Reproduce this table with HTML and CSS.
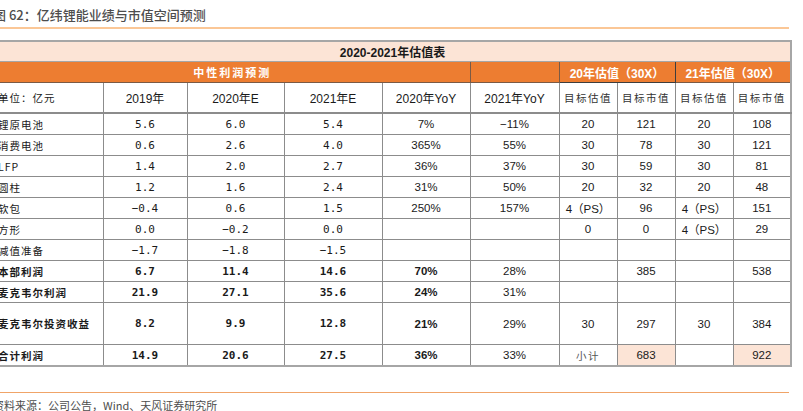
FILE: index.html
```html
<!DOCTYPE html>
<html lang="zh">
<head>
<meta charset="utf-8">
<title>亿纬锂能业绩与市值空间预测</title>
<link rel="stylesheet" href="styles.css">
</head>
<body>
<div class="page">
  <div class="fig-title">图 62：亿纬锂能业绩与市值空间预测</div>
  <table class="val">
    <colgroup>
      <col class="c-label"><col class="c-y19"><col class="c-y20"><col class="c-y21"><col class="c-yoy20"><col class="c-yoy21">
      <col class="c-v"><col class="c-v"><col class="c-v"><col class="c-v">
    </colgroup>
    <tr class="r-title"><td colspan="10">2020-2021年估值表</td></tr>
    <tr class="r-orange">
      <td colspan="5" class="or-main">中性利润预测</td>
      <td class="or-empty"></td>
      <td colspan="2" class="or-box">20年估值（30X）</td>
      <td colspan="2" class="or-last">21年估值（30X）</td>
    </tr>
    <tr class="r-head">
      <td class="lbl">单位：亿元</td>
      <td>2019年</td><td>2020年E</td><td>2021年E</td><td>2020年YoY</td><td>2021年YoY</td>
      <td class="cjk">目标估值</td><td class="cjk">目标市值</td><td class="cjk">目标估值</td><td class="cjk">目标市值</td>
    </tr>
    <tr><td class="lbl">锂原电池</td><td class="m">5.6</td><td class="m">6.0</td><td class="m">5.4</td><td>7%</td><td>−11%</td><td>20</td><td>121</td><td>20</td><td>108</td></tr>
    <tr><td class="lbl">消费电池</td><td class="m">0.6</td><td class="m">2.6</td><td class="m">4.0</td><td>365%</td><td>55%</td><td>30</td><td>78</td><td>30</td><td>121</td></tr>
    <tr><td class="lbl">LFP</td><td class="m">1.4</td><td class="m">2.0</td><td class="m">2.7</td><td>36%</td><td>37%</td><td>30</td><td>59</td><td>30</td><td>81</td></tr>
    <tr><td class="lbl">圆柱</td><td class="m">1.2</td><td class="m">1.6</td><td class="m">2.4</td><td>31%</td><td>50%</td><td>20</td><td>32</td><td>20</td><td>48</td></tr>
    <tr><td class="lbl">软包</td><td class="m">−0.4</td><td class="m">0.6</td><td class="m">1.5</td><td>250%</td><td>157%</td><td>4（PS）</td><td>96</td><td>4（PS）</td><td>151</td></tr>
    <tr><td class="lbl">方形</td><td class="m">0.0</td><td class="m">−0.2</td><td class="m">0.0</td><td></td><td></td><td>0</td><td>0</td><td>4（PS）</td><td>29</td></tr>
    <tr><td class="lbl">减值准备</td><td class="m">−1.7</td><td class="m">−1.8</td><td class="m">−1.5</td><td></td><td></td><td></td><td></td><td></td><td></td></tr>
    <tr class="b"><td class="lbl">本部利润</td><td class="m">6.7</td><td class="m">11.4</td><td class="m">14.6</td><td>70%</td><td class="n">28%</td><td></td><td class="n">385</td><td></td><td class="n">538</td></tr>
    <tr class="b"><td class="lbl">麦克韦尔利润</td><td class="m">21.9</td><td class="m">27.1</td><td class="m">35.6</td><td>24%</td><td class="n">31%</td><td></td><td></td><td></td><td></td></tr>
    <tr class="b r-tall"><td class="lbl">麦克韦尔投资收益</td><td class="m">8.2</td><td class="m">9.9</td><td class="m">12.8</td><td>21%</td><td class="n">29%</td><td class="n">30</td><td class="n">297</td><td class="n">30</td><td class="n">384</td></tr>
    <tr class="b"><td class="lbl">合计利润</td><td class="m">14.9</td><td class="m">20.6</td><td class="m">27.5</td><td>36%</td><td class="n">33%</td><td class="n cjk sub">小计</td><td class="n peach">683</td><td></td><td class="n peach">922</td></tr>
  </table>
  <div class="source">资料来源：公司公告，Wind、天风证券研究所</div>
</div>
</body>
</html>
```

FILE: styles.css
```css
html, body {
  margin: 0;
  padding: 0;
  background: #ffffff;
}

body {
  font-family: "Liberation Sans", "Noto Sans CJK SC", sans-serif;
  color: #1a1a1a;
}

.page {
  margin-left: -7px;
  width: 797px;
}

.fig-title {
  font-family: "Noto Sans CJK SC", sans-serif;
  font-size: 13px;
  font-weight: 500;
  color: #4d4d4d;
  line-height: 20px;
  padding-top: 5px;
  height: 22px;
  border-bottom: 2px solid #fbc796;
  width: 796px;
  margin-bottom: 11px;
}

.val {
  border-collapse: collapse;
  table-layout: fixed;
  width: 797px;
  border: 2px solid #a6a6a6;
}

.c-label { width: 109px; }
.c-y19 { width: 84px; }
.c-y20 { width: 97px; }
.c-y21 { width: 98px; }
.c-yoy20 { width: 88px; }
.c-yoy21 { width: 89px; }
.c-v { width: 58px; }

.val td {
  border: 1px solid #8c8c8c;
  padding: 0;
  text-align: center;
  vertical-align: middle;
  font-size: 11.5px;
  height: 20px;
  white-space: nowrap;
  overflow: hidden;
}

.val .r-title td {
  background: #fce4d6;
  font-weight: bold;
  font-size: 12px;
  height: 19px;
  border-color: #a6a6a6;
}

.val .r-orange td {
  background: #ed7d31;
  color: #ffffff;
  font-weight: bold;
  font-size: 12px;
  height: 20px;
  border-color: #7a5a45;
}

.val .r-orange .or-main {
  font-family: "Noto Sans CJK SC", sans-serif;
  letter-spacing: 2px;
  font-size: 11px;
  border-right-color: #7a5a45;
}

.val .r-orange .or-box {
  border: 1px solid #3d3d3d;
}

.val .r-orange .or-last {
  border-right-color: #a6a6a6;
}

.val .r-head td {
  height: 29px;
  border-bottom: 2px solid #8c8c8c;
  font-size: 12px;
}

.val td.lbl {
  text-align: left;
  padding-left: 3px;
  font-family: "Noto Sans CJK SC", sans-serif;
  font-size: 10.5px;
  letter-spacing: 1px;
}

.val td.cjk {
  font-family: "Noto Sans CJK SC", sans-serif;
  font-size: 10.5px;
  letter-spacing: 1.5px;
  color: #333333;
}

.val td.m {
  font-family: "DejaVu Sans Mono", monospace;
  font-size: 11px;
}

.val tr.b td {
  font-weight: bold;
}

.val tr.b td.n {
  font-weight: normal;
}

.val tr.r-tall td {
  height: 41px;
}

.val td.sub {
  color: #555555;
}

.val td.peach {
  background: #fce4d6;
}

.source {
  margin-top: 25px;
  border-top: 1.5px solid #f0a468;
  width: 796px;
  font-family: "Noto Sans CJK SC", sans-serif;
  font-size: 11px;
  color: #4d4d4d;
  padding-top: 4px;
  line-height: 16px;
}
```
